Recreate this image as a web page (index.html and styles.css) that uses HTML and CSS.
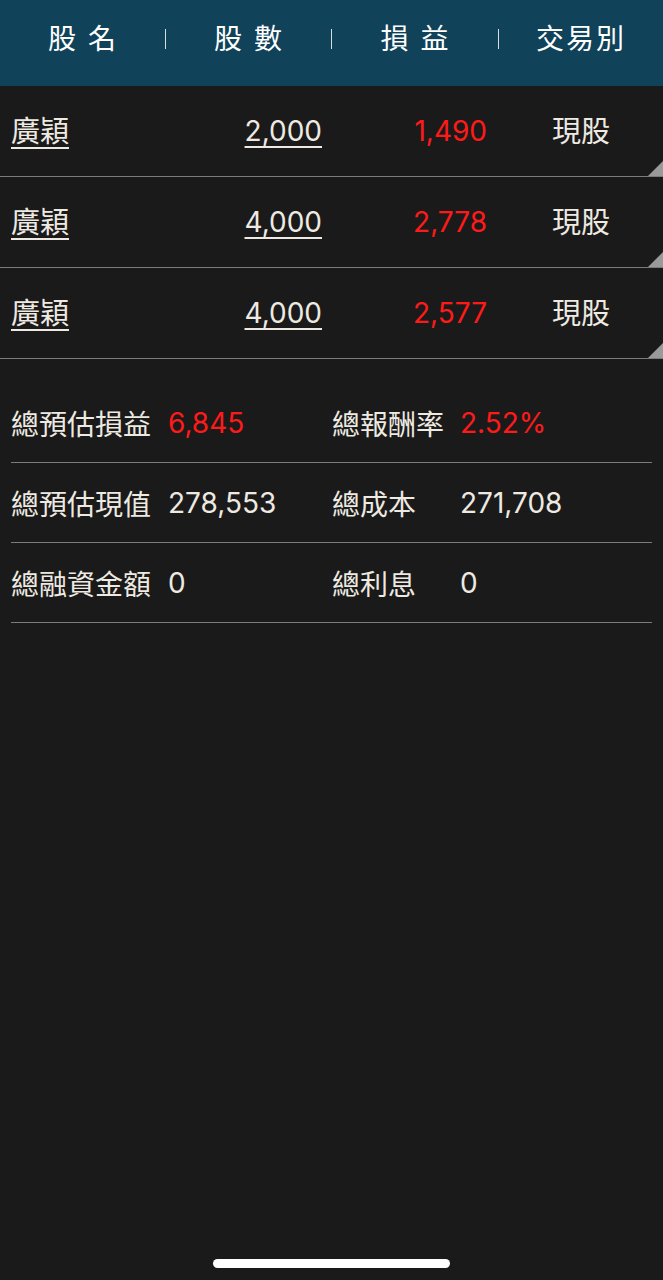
FILE: index.html
```html
<!DOCTYPE html>
<html lang="zh-Hant">
<head>
<meta charset="utf-8">
<link rel="stylesheet" href="styles.css">
</head>
<body>
<div class="screen">
  <div class="header">
    <div class="hcell">股 名</div>
    <div class="hcell">股 數</div>
    <div class="hcell">損 益</div>
    <div class="hcell last">交易別</div>
  </div>
  <div class="row">
    <div class="cell name"><span class="link">廣穎</span></div>
    <div class="cell qty num"><span class="link">2,000</span></div>
    <div class="cell pl num">1,490</div>
    <div class="cell type">現股</div>
    <div class="corner"></div>
  </div>
  <div class="row">
    <div class="cell name"><span class="link">廣穎</span></div>
    <div class="cell qty num"><span class="link">4,000</span></div>
    <div class="cell pl num">2,778</div>
    <div class="cell type">現股</div>
    <div class="corner"></div>
  </div>
  <div class="row">
    <div class="cell name"><span class="link">廣穎</span></div>
    <div class="cell qty num"><span class="link">4,000</span></div>
    <div class="cell pl num">2,577</div>
    <div class="cell type">現股</div>
    <div class="corner"></div>
  </div>
  <div class="summary">
    <div class="srow">
      <div class="half first"><span class="label">總預估損益</span><span class="val num red">6,845</span></div>
      <div class="half second"><span class="label">總報酬率</span><span class="val num red">2.52%</span></div>
    </div>
    <div class="srow">
      <div class="half first"><span class="label">總預估現值</span><span class="val num">278,553</span></div>
      <div class="half second"><span class="label">總成本</span><span class="val num">271,708</span></div>
    </div>
    <div class="srow">
      <div class="half first"><span class="label">總融資金額</span><span class="val num">0</span></div>
      <div class="half second"><span class="label">總利息</span><span class="val num">0</span></div>
    </div>
  </div>
  <div class="home-bar"></div>
</div>
</body>
</html>
```
FILE: styles.css
```css
html, body {
  margin: 0;
  padding: 0;
  background: #1a1a1a;
}
.screen {
  width: 663px;
  height: 1280px;
  position: relative;
  background: #1a1a1a;
  color: #eeeae2;
  font-family: Inter, "Noto Sans CJK TC", sans-serif;
  font-size: 29px;
}
.num { font-size: 28px; }
.header {
  height: 86px;
  box-sizing: border-box;
  padding-bottom: 8px;
  background: #10425a;
  display: grid;
  grid-template-columns: 166px 166px 167px 164px;
  align-items: center;
}
.hcell {
  text-align: center;
  color: #ffffff;
  font-size: 28px;
  letter-spacing: 2px;
  line-height: 1;
  position: relative;
}
.hcell::after {
  content: "";
  position: absolute;
  right: 0;
  top: 50%;
  margin-top: -10px;
  width: 1px;
  height: 20px;
  background: #d8dde0;
}
.hcell.last::after { display: none; }
.row {
  height: 90px;
  border-bottom: 1px solid #7c7c7c;
  display: grid;
  grid-template-columns: 166px 166px 167px 164px;
  align-items: center;
  position: relative;
}
.cell { line-height: 1; }
.name { padding-left: 11px; }
.qty { text-align: right; padding-right: 10px; }
.pl { text-align: right; padding-right: 12px; color: #ff1a1a; }
.type { text-align: center; }
.link {
  text-decoration: underline;
  text-decoration-thickness: 1.5px;
  text-underline-offset: 5px;
}
.corner {
  position: absolute;
  right: 0;
  bottom: 0;
  width: 0;
  height: 0;
  border-style: solid;
  border-width: 0 0 15px 15px;
  border-color: transparent transparent #9a9a9a transparent;
}
.summary {
  padding: 24px 11px 0 11px;
}
.srow {
  height: 79px;
  border-bottom: 1px solid #7c7c7c;
  display: flex;
  align-items: center;
}
.half {
  display: flex;
  align-items: center;
}
.half.first { width: 321px; }
.label { display: inline-block; font-size: 28px; }
.first .label { width: 157px; }
.second .label { width: 128px; }
.red { color: #ff1a1a; }
.home-bar {
  position: absolute;
  left: 213px;
  top: 1259px;
  width: 237px;
  height: 9px;
  border-radius: 5px;
  background: #ffffff;
}
```
